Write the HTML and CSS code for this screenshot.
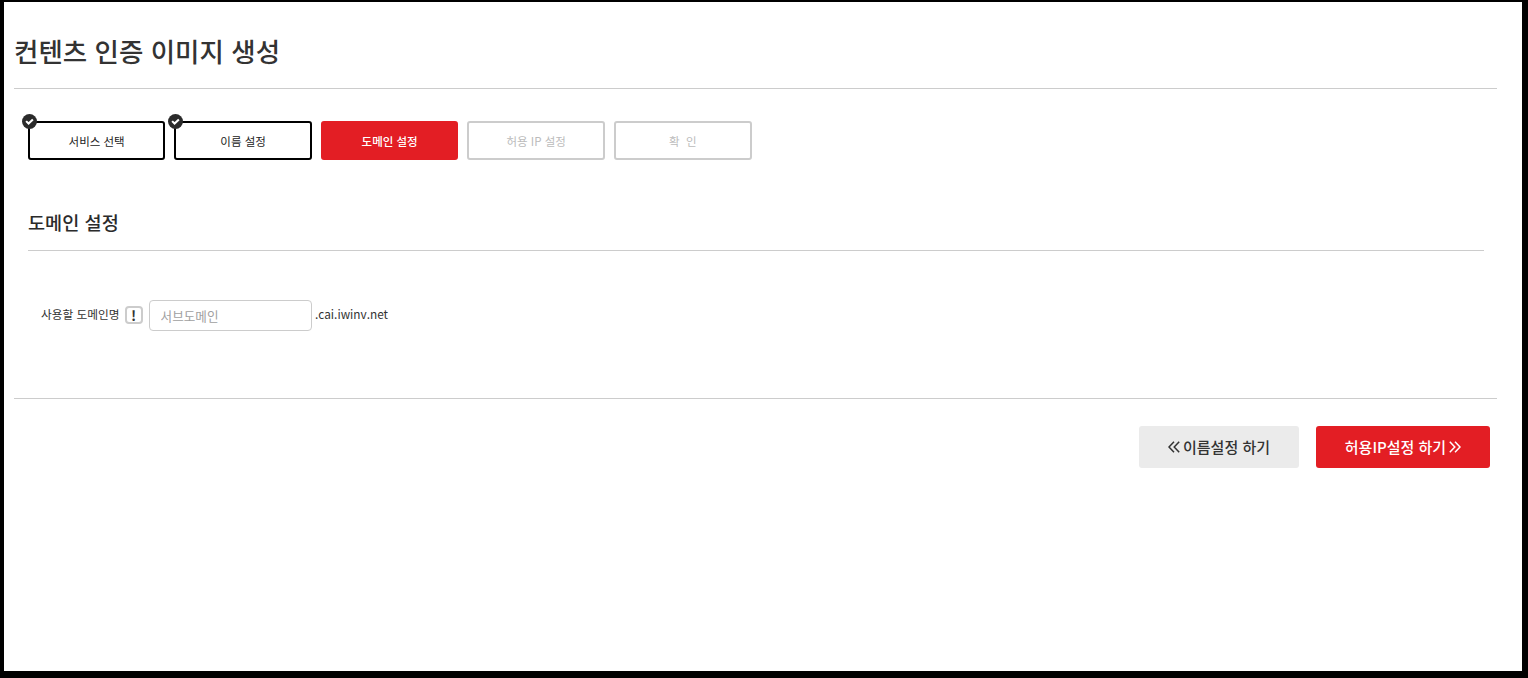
FILE: index.html
```html
<!DOCTYPE html>
<html lang="ko">
<head>
  <meta charset="UTF-8" />
  <meta name="viewport" content="width=device-width, initial-scale=1" />
  <title>컨텐츠 인증 이미지 생성</title>
  <link rel="stylesheet" href="styles.css">
</head>
<body>
  <div class="frame">
    <div class="page">
      <h1 class="page-title">컨텐츠 인증 이미지 생성</h1>

      <!-- steps -->
      <ul class="steps">
        <li class="step done">
          <svg class="check" viewBox="0 0 16 16" width="15" height="15"><circle cx="8" cy="8" r="8" fill="#2b2b2b"/><path d="M4.4 7.6l2.6 2.6 4.6-4.4" fill="none" stroke="#fff" stroke-width="2.2"/></svg>
          서비스 선택
        </li>
        <li class="step done">
          <svg class="check" viewBox="0 0 16 16" width="15" height="15"><circle cx="8" cy="8" r="8" fill="#2b2b2b"/><path d="M4.4 7.6l2.6 2.6 4.6-4.4" fill="none" stroke="#fff" stroke-width="2.2"/></svg>
          이름 설정
        </li>
        <li class="step active">도메인 설정</li>
        <li class="step">허용 IP 설정</li>
        <li class="step">확&nbsp;&nbsp;인</li>
      </ul>

      <div class="section">
        <h2 class="section-title">도메인 설정</h2>
        <div class="field-row">
          <label class="field-label" for="subdomain">사용할 도메인명</label>
          <span class="info-badge">!</span>
          <input id="subdomain" class="text-input" type="text" placeholder="서브도메인">
          <span class="suffix">.cai.iwinv.net</span>
        </div>
      </div>

      <div class="actions">
        <button class="btn btn-prev">
          <svg class="arrows" viewBox="0 0 12 12" width="12" height="12"><path d="M6 .7L1 6l5 5.3M11.2 .7L6.2 6l5 5.3" fill="none" stroke="currentColor" stroke-width="1.5"/></svg>
          이름설정 하기
        </button>
        <button class="btn btn-next">
          허용IP설정 하기
          <svg class="arrows" viewBox="0 0 12 12" width="12" height="12"><path d="M.8 .7L5.8 6l-5 5.3M6 .7L11 6l-5 5.3" fill="none" stroke="currentColor" stroke-width="1.5"/></svg>
        </button>
      </div>
    </div>
  </div>
</body>
</html>
```

FILE: styles.css
```css
* {
  margin: 0;
  padding: 0;
  box-sizing: border-box;
  font-family: 'Noto Sans CJK KR', 'Noto Sans', sans-serif;
}

html, body {
  height: 100%;
  overflow: hidden;
}

body {
  background: #000;
}

.frame {
  height: 678px;
  padding: 2px 6px 7px 4px;
}

.page {
  background: #fff;
  height: 100%;
  padding: 0 25px 0 10px;
  color: #333;
}

.page-title {
  height: 87px;
  padding-top: 29px;
  font-size: 26.5px;
  line-height: 40px;
  font-weight: 500;
  border-bottom: 1px solid #ccc;
}

.steps {
  display: flex;
  gap: 9px;
  list-style: none;
  margin: 32px 0 0 13.9px;
}

.step {
  position: relative;
  width: 137.5px;
  height: 39px;
  border: 2px solid #ccc;
  border-radius: 3px;
  font-size: 11.5px;
  line-height: 37px;
  text-align: center;
  color: #bbb;
}

.step:last-child {
  width: 138px;
}

.step.done {
  border-color: #000;
  color: #222;
}

.step.active {
  background: #e31e24;
  border-color: #e31e24;
  color: #fff;
  font-weight: 500;
}

.check {
  position: absolute;
  left: -8px;
  top: -9.5px;
}

.section {
  margin: 0 13px 0 14px;
  height: 238px;
}

.section-title {
  height: 91px;
  padding-top: 45px;
  font-size: 18.6px;
  line-height: 34px;
  font-weight: 500;
  color: #2b2b2b;
  border-bottom: 1px solid #ccc;
}

.field-row {
  display: flex;
  align-items: center;
  margin-top: 49px;
  padding-left: 13px;
}

.field-label {
  font-size: 11.7px;
  color: #333;
  margin: 0 5px 5px 0;
}

.info-badge {
  width: 18px;
  height: 18px;
  border: 2px solid #ccc;
  border-radius: 4px;
  font-size: 14px;
  font-weight: 700;
  line-height: 14px;
  text-align: center;
  color: #333;
  margin: 0 6px 1px 0;
}

.text-input {
  width: 163px;
  height: 31px;
  border: 1px solid #ccc;
  border-radius: 4px;
  padding: 0 11px 1px;
  font-size: 12.6px;
  outline: none;
}

.text-input::placeholder {
  color: #a0a0a0;
}

.suffix {
  font-size: 11.8px;
  color: #333;
  margin: 0 0 5px 3.5px;
}

.actions {
  display: flex;
  justify-content: flex-end;
  gap: 17px;
  padding: 27px 7px 0 0;
  border-top: 1px solid #ccc;
}

.btn {
  display: flex;
  align-items: center;
  justify-content: center;
  gap: 3px;
  height: 42px;
  padding-bottom: 2px;
  border: none;
  border-radius: 3px;
  font-size: 15px;
  font-weight: 500;
  cursor: pointer;
}

.btn-prev {
  width: 160px;
  background: #ebebeb;
  color: #333;
}

.btn-next {
  width: 174px;
  background: #e31e24;
  color: #fff;
}

.arrows {
  margin-top: 2px;
}
```
